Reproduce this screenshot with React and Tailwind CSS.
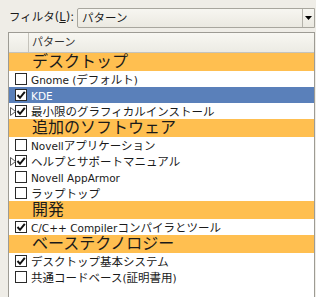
import React from 'react';

// ── Pattern list data ─────────────────────────────────────────────
const ROWS = [
  { type: 'cat', label: 'デスクトップ' },
  { type: 'item', label: 'Gnome (デフォルト)', checked: false },
  { type: 'item', label: 'KDE', checked: true, selected: true },
  { type: 'item', label: '最小限のグラフィカルインストール', checked: true, expander: true },
  { type: 'cat', label: '追加のソフトウェア' },
  { type: 'item', label: 'Novellアプリケーション', checked: false },
  { type: 'item', label: 'ヘルプとサポートマニュアル', checked: true, expander: true },
  { type: 'item', label: 'Novell AppArmor', checked: false },
  { type: 'item', label: 'ラップトップ', checked: false },
  { type: 'cat', label: '開発' },
  { type: 'item', label: 'C/C++ Compilerコンパイラとツール', checked: true },
  { type: 'cat', label: 'ベーステクノロジー' },
  { type: 'item', label: 'デスクトップ基本システム', checked: true },
  { type: 'item', label: '共通コードベース(証明書用)', checked: false },
];

const FONT = { fontFamily: '"DejaVu Sans", "Noto Sans CJK JP", sans-serif' };

// latin runs a bit smaller than the japanese runs, like the reference
function Label({ text }) {
  return text.split(/([\u3000-\u9fff\uff00-\uffef]+)/).filter(Boolean).map((s, i) =>
    /[\u3000-\u9fff\uff00-\uffef]/.test(s)
      ? <span key={i} className="text-[11.5px]">{s}</span>
      : <span key={i} className="text-[10.5px]">{s}</span>
  );
}

function Check({ checked }) {
  return (
    <span className="shrink-0 w-[12px] h-[12px] border border-[#2a2a2a] bg-white flex items-center justify-center">
      {checked && (
        <svg width="10" height="10" viewBox="0 0 10 10">
          <path d="M1.5 5 L4 7.8 L8.8 1.8" stroke="#111" strokeWidth="2" fill="none" />
        </svg>
      )}
    </span>
  );
}

function Expander() {
  return (
    <svg width="6" height="9" viewBox="0 0 6 9" className="absolute left-[1px] top-[4px]">
      <path d="M0.5 0.5 L5.5 4.5 L0.5 8.5 Z" stroke="#555" fill="none" />
    </svg>
  );
}

export default function App() {
  return (
    <div className="w-[316px] h-[297px] bg-[#efede7] overflow-hidden text-[#1a1a1a]" style={FONT}>
      {/* Filter */}
      <div className="flex items-center h-[32px] pt-[4px] pl-[9px] pr-[1px] gap-[3px]">
        <span className="shrink-0 whitespace-nowrap text-[11.5px]">フィルタ(<span className="underline">L</span>):</span>
        <div className="flex-1 flex h-[20px] border border-[#a8a69e] rounded-l-[2px] bg-gradient-to-b from-[#f7f6f1] to-[#ebe9e1]">
          <span className="flex-1 pl-[4px] text-[11.5px] leading-[18px]">パターン</span>
          <span className="w-[12px] border-l border-[#b5b3ab] flex items-center justify-center">
            <svg width="7" height="4" viewBox="0 0 7 4"><path d="M0 0 H7 L3.5 4 Z" fill="#000" /></svg>
          </span>
        </div>
      </div>

      {/* List */}
      <div className="ml-[8px] mr-[1px] h-[265px] border-l border-t border-r border-[#9d9b94] bg-white">
        <div className="flex h-[20px] bg-gradient-to-b from-[#f8f7f2] to-[#ecebe4] border-b border-[#c5c3bb]">
          <span className="w-[20px] border-r border-[#c5c3bb]" />
          <span className="pl-[3px] text-[11px] leading-[19px] text-[#333]">パターン</span>
        </div>
        {ROWS.map((r, i) =>
          r.type === 'cat' ? (
            <div key={i} className="h-[18px] bg-[#ffbf50] pl-[23px] text-[16px] leading-[18px] whitespace-nowrap">
              {r.label}
            </div>
          ) : (
            <div
              key={i}
              className={`relative h-[16px] flex items-center gap-[4px] pl-[6px] whitespace-nowrap ${r.selected ? 'bg-[#5a80ba] text-white' : ''}`}
            >
              {r.expander && <Expander />}
              <Check checked={r.checked} />
              <span className="leading-[16px]"><Label text={r.label} /></span>
            </div>
          )
        )}
      </div>
    </div>
  );
}
